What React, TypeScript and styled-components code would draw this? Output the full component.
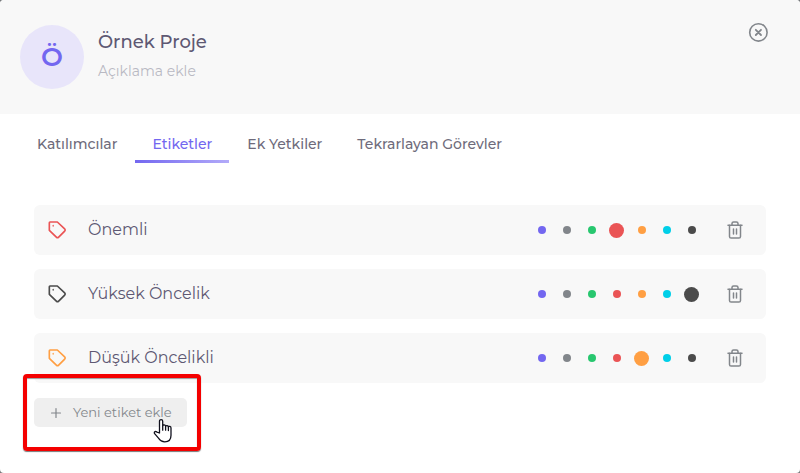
import React, { useState } from "react";
import styled, { createGlobalStyle } from "styled-components";

const GlobalStyle = createGlobalStyle`
  *, *::before, *::after { box-sizing: border-box; }
  body { margin: 0; background: #77797c; }
  body, button, input { font-family: Montserrat, Inter, sans-serif; }
  button { border: 0; padding: 0; background: none; color: inherit; cursor: pointer; }
`;

const Dialog = styled.main`
  min-height: 100vh;
  background: #fff;
  border-radius: 4px;
  overflow: hidden;
`;

const Header = styled.header`
  display: flex;
  align-items: flex-start;
  gap: 14px;
  padding: 25px 31px 25px 20px;
  background: #f8f8f8;
`;

const Avatar = styled.div`
  display: grid;
  place-items: center;
  width: 64px;
  height: 64px;
  border-radius: 50%;
  background: #e8e5fa;
  color: #7367f0;
  font-size: 26px;
  line-height: 32px;
  font-weight: 600;
`;

const Heading = styled.div`
  flex: 1;
  padding-top: 5px;
`;

const Title = styled.h1`
  margin: 0 0 7px;
  color: #5e5873;
  font-size: 18px;
  line-height: 24px;
  font-weight: 500;
`;

const DescriptionButton = styled.button`
  display: block;
  color: #b9b9c3;
  font-size: 14px;
  line-height: 20px;
`;

const CloseButton = styled.button`
  display: flex;
  margin-top: -4px;
  color: #82868b;
`;

const Tabs = styled.nav`
  display: flex;
  gap: 1px;
  padding: 13px 20px 0;
`;

const Tab = styled.button<{ $active: boolean }>`
  padding: 7px 17px 6px;
  border-bottom: 3px solid transparent;
  border-image: ${(p) => (p.$active ? "linear-gradient(90deg, #7367f0, #b3abf9) 1" : "none")};
  color: ${(p) => (p.$active ? "#7367f0" : "#6e6b7b")};
  font-size: 14px;
  line-height: 20px;
  font-weight: 500;
  white-space: nowrap;
`;

const Panel = styled.section`
  padding: 42px 34px 22px;
`;

const TagList = styled.ul`
  display: grid;
  gap: 14px;
  margin: 0 0 15px;
  padding: 0;
  list-style: none;
`;

const TagRow = styled.li`
  display: flex;
  align-items: center;
  min-height: 50px;
  padding: 0 22px 0 13px;
  border-radius: 6px;
  background: #f8f8f8;
`;

const TagName = styled.span`
  flex: 1;
  padding-left: 21px;
  color: #5e5873;
  font-size: 16px;
  line-height: 24px;
`;

const Palette = styled.div`
  display: flex;
  margin-right: 22px;
`;

const Swatch = styled.label`
  display: grid;
  place-items: center;
  width: 25px;
  height: 24px;
  cursor: pointer;
`;

const SwatchInput = styled.input<{ $color: string }>`
  appearance: none;
  width: 8px;
  height: 8px;
  margin: 0;
  border-radius: 50%;
  background: ${(p) => p.$color};
  cursor: pointer;
  &:checked { width: 15px; height: 15px; }
`;

const IconButton = styled.button`
  display: flex;
  color: #82868b;
`;

const AddArea = styled.div`
  position: relative;
  width: fit-content;
`;

const AddButton = styled.button`
  display: flex;
  align-items: center;
  gap: 10px;
  padding: 4px 15px;
  border-radius: 5px;
  background: #efefef;
  color: #82868b;
  font-size: 13px;
  line-height: 21px;
  font-weight: 400;
  white-space: nowrap;
`;

const Highlight = styled.div`
  position: absolute;
  inset: -24px -14px -24px -11px;
  border: 4px solid #f40000;
  border-radius: 4px;
  box-shadow: 0 1px 1px #777, inset 0 1px 1px #999;
  pointer-events: none;
`;

const Pointer = styled.svg`
  position: absolute;
  right: 14px;
  top: 20px;
  pointer-events: none;
`;

const TagIcon = ({ color }: { color: string }) => (
  <svg width="20" height="20" viewBox="0 0 24 24" fill="none" stroke={color} strokeWidth="2" strokeLinecap="round" strokeLinejoin="round" aria-hidden="true">
    <path d="M21.2 13.4l-7.2 7.2a2 2 0 0 1-2.8 0L2.8 12.4V3.2a.8.8 0 0 1 .8-.8H12.4l8.8 8.2a2 2 0 0 1 0 2.8z" />
    <path d="M7.4 6.6v.6" strokeWidth="1.6" />
  </svg>
);

const TrashIcon = () => (
  <svg width="18" height="20" viewBox="0 0 18 20" fill="none" stroke="currentColor" strokeWidth="1.5" strokeLinecap="round" strokeLinejoin="round" aria-hidden="true">
    <path d="M2 5.2h14M3.5 5v11.4a1.6 1.6 0 0 0 1.6 1.6h7.8a1.6 1.6 0 0 0 1.6-1.6V5M6 5V3.6A1.6 1.6 0 0 1 7.6 2h2.8A1.6 1.6 0 0 1 12 3.6V5M7.5 9v5M10.5 9v5" />
  </svg>
);

const COLORS = [
  { name: "Mor", value: "#7367f0" },
  { name: "Gri", value: "#82868b" },
  { name: "Yeşil", value: "#28c76f" },
  { name: "Kırmızı", value: "#ea5455" },
  { name: "Turuncu", value: "#ff9f43" },
  { name: "Turkuaz", value: "#00cfe8" },
  { name: "Siyah", value: "#4b4b4b" },
];

const TABS = ["Katılımcılar", "Etiketler", "Ek Yetkiler", "Tekrarlayan Görevler"];

export default function App() {
  const [tab, setTab] = useState("Etiketler");
  const [tags, setTags] = useState([
    { name: "Önemli", color: "#ea5455" },
    { name: "Yüksek Öncelik", color: "#4b4b4b" },
    { name: "Düşük Öncelikli", color: "#ff9f43" },
  ]);

  const recolor = (name: string, color: string) =>
    setTags((all) => all.map((t) => (t.name === name ? { ...t, color } : t)));

  return (
    <>
      <GlobalStyle />
      <Dialog>
        <Header>
          <Avatar>Ö</Avatar>
          <Heading>
            <Title>Örnek Proje</Title>
            <DescriptionButton type="button">Açıklama ekle</DescriptionButton>
          </Heading>
          <CloseButton type="button" aria-label="Kapat">
            <svg width="22" height="22" viewBox="0 0 22 22" fill="none" stroke="currentColor" strokeLinecap="round" aria-hidden="true">
              <circle cx="11.4" cy="11.4" r="8.7" strokeWidth="1.6" />
              <path d="M8.8 8.8l5.2 5.2M14 8.8l-5.2 5.2" strokeWidth="1.8" />
            </svg>
          </CloseButton>
        </Header>
        <Tabs>
          {TABS.map((t) => (
            <Tab key={t} type="button" $active={t === tab} onClick={() => setTab(t)}>
              {t}
            </Tab>
          ))}
        </Tabs>
        <Panel>
          <TagList>
            {tags.map((tag) => (
              <TagRow key={tag.name}>
                <TagIcon color={tag.color} />
                <TagName>{tag.name}</TagName>
                <Palette role="radiogroup" aria-label={tag.name}>
                  {COLORS.map((c) => (
                    <Swatch key={c.value}>
                      <SwatchInput
                        type="radio"
                        name={tag.name}
                        aria-label={c.name}
                        $color={c.value}
                        checked={tag.color === c.value}
                        onChange={() => recolor(tag.name, c.value)}
                      />
                    </Swatch>
                  ))}
                </Palette>
                <IconButton
                  type="button"
                  aria-label="Sil"
                  onClick={() => setTags((all) => all.filter((t) => t.name !== tag.name))}
                >
                  <TrashIcon />
                </IconButton>
              </TagRow>
            ))}
          </TagList>
          <AddArea>
            <AddButton type="button">
              <svg width="14" height="14" viewBox="0 0 14 14" stroke="currentColor" strokeWidth="1.2" strokeLinecap="round" aria-hidden="true">
                <path d="M7 2.5v9M2.5 7h9" />
              </svg>
              Yeni etiket ekle
            </AddButton>
            <Highlight />
            <Pointer width="20" height="26" viewBox="0 0 20 26" fill="#fff" stroke="#10101c" strokeWidth="1.3" strokeLinejoin="round" strokeLinecap="round" aria-hidden="true">
              <path d="M6.5 15V3.2a1.6 1.6 0 0 1 3.2 0V7.8c.3-1.2 2.6-1.2 2.9.4.5-1 2.6-.8 2.8.7.5-.9 2.6-.6 2.6 1v7.3c0 4-2.4 6.6-6.2 6.6-3.2 0-4.8-1.4-6.3-3.6L1.4 15.4c-.6-1.7 1.2-2.5 2.5-1.3z" />
              <path d="M9.7 7.8v4.4M12.6 8.2v4M15.4 8.9v3.7" fill="none" />
            </Pointer>
          </AddArea>
        </Panel>
      </Dialog>
    </>
  );
}
